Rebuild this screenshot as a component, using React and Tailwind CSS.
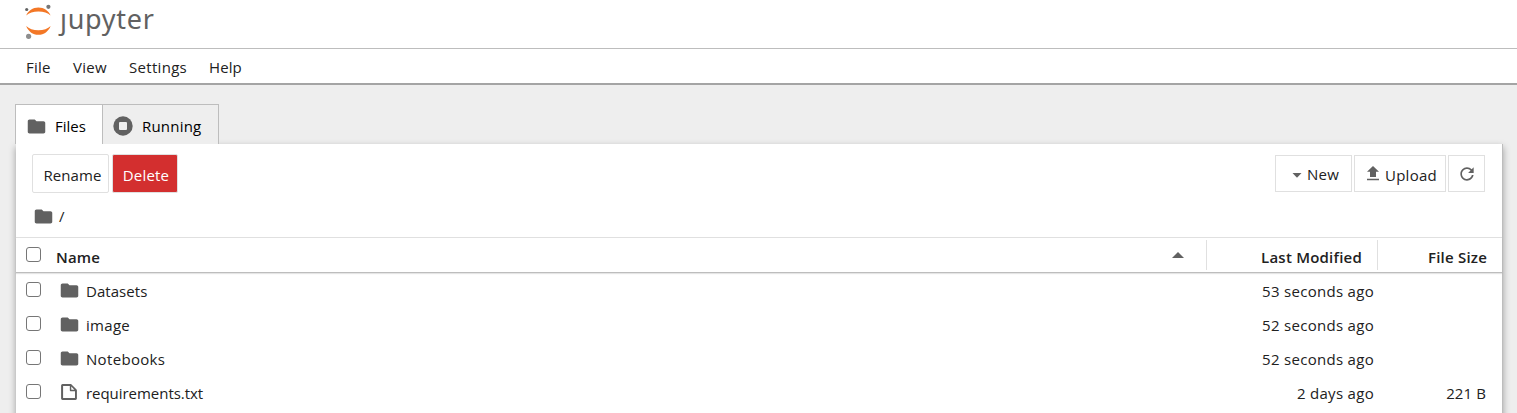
import React from 'react';

const ROWS = [
  { name: 'Datasets', kind: 'folder', modified: '53 seconds ago', size: '', track: 'tracking-[0.050px]' },
  { name: 'image', kind: 'folder', modified: '52 seconds ago', size: '', track: 'tracking-[0.3px]' },
  { name: 'Notebooks', kind: 'folder', modified: '52 seconds ago', size: '', track: 'tracking-[0.33px]' },
  { name: 'requirements.txt', kind: 'file', modified: '2 days ago', size: '221 B', track: 'tracking-[-0.040px]' },
];

function Folder() {
  return (
    <svg className="block h-[21px] w-[21px] shrink-0" viewBox="0 0 24 24" fill="#616161">
      <path d="M10 4H4c-1.1 0-1.99.9-1.99 2L2 18c0 1.1.9 2 2 2h16c1.1 0 2-.9 2-2V8c0-1.1-.9-2-2-2h-8l-2-2z" />
    </svg>
  );
}

function FileIcon() {
  return (
    <svg className="block h-[20px] w-[20px] shrink-0" viewBox="0 0 22 22" fill="#616161">
      <path d="M19.3 8.2l-5.5-5.5c-.3-.3-.7-.5-1.2-.5H3.9c-.8.1-1.6.9-1.6 1.8v14.1c0 .9.7 1.6 1.6 1.6h14.2c.9 0 1.6-.7 1.6-1.6V9.4c.1-.5-.1-.9-.4-1.2zm-5.8-3.3l3.4 3.6h-3.4V4.9zm3.9 12.7H4.7c-.1 0-.2 0-.2-.2V4.7c0-.2.1-.3.2-.3h7.2v4.4s0 .8.3 1.1c.3.3 1.1.3 1.1.3h4.3v7.2s-.1.2-.2.2z" />
    </svg>
  );
}

function Checkbox() {
  return <span className="block h-[15px] w-[15px] shrink-0 rounded-[3px] border border-[#767676] bg-white" />;
}

function Logo() {
  return (
    <div className="flex h-12 items-start pl-[25px]">
      <svg className="block h-[40px] w-[28px]" viewBox="0 0 28 40">
        <path d="M1.2 15.5C3.1 10.8 7.8 7.5 13.4 7.5s10.300 3.300 12.200 8C22.900 13.100 18.500 11.600 13.400 11.600S3.900 13.100 1.200 15.500z" fill="#f37726" />
        <path d="M1.2 25.900C3.100 31.200 7.800 34.700 13.400 34.700s10.300-3.500 12.200-8.800C22.900 28.500 18.500 30.200 13.400 30.200S3.900 28.500 1.200 25.900z" fill="#f37726" />
        <circle cx="23.400" cy="6.800" r="2.100" fill="#767677" />
        <circle cx="1.700" cy="9.500" r="1.600" fill="#616262" />
        <circle cx="3.600" cy="36.300" r="2.600" fill="#8e8e8e" />
      </svg>
      <div className="ml-[7px] mt-px flex font-['Noto_Sans'] text-[27px] leading-[36px] tracking-[0.7px] text-[#616161]">
        <span className="[clip-path:inset(12px_-6px_-6px_-6px)]">j</span>
        <span>upyter</span>
      </div>
    </div>
  );
}

export default function App() {
  return (
    <div className="flex h-[413px] w-[1517px] flex-col overflow-hidden bg-[#eee] font-['Open_Sans','Noto_Sans',sans-serif] text-[15px] leading-5 text-[#212121]">
      <header className="h-[49px] shrink-0 border-b border-[#bdbdbd] bg-white">
        <Logo />
      </header>
      <nav className="flex h-[36px] shrink-0 items-center border-b-2 border-[#a4a4a4] bg-white pl-[26px] pt-px">
        <span className="w-[47px] tracking-[0.2px]">File</span>
        <span className="w-[56px] tracking-[0.3px]">View</span>
        <span className="w-[80px] tracking-[0.3px]">Settings</span>
        <span className="tracking-[0.1px]">Help</span>
      </nav>

      <main className="mt-[19px] flex flex-1 flex-col pl-[15px] pr-[14px]">
        <div className="relative z-10 flex h-[40px] shrink-0 text-black">
          <div className="flex w-[87px] items-center border-l border-t border-[#bdbdbd] bg-white pl-[10px] pt-[3px]">
            <Folder />
            <span className="ml-[8px]">Files</span>
          </div>
          <div className="flex w-[117px] items-center border-x border-t border-[#bdbdbd] bg-[#eee] pl-[8px] pt-[3px]">
            <svg className="block h-[24px] w-[24px]" viewBox="0 0 24 24">
              <circle cx="12" cy="12" r="9.700" fill="#616161" />
              <rect x="8" y="8" width="8" height="8" rx="1" fill="#eee" />
            </svg>
            <span className="ml-[7px] tracking-[0.2px]">Running</span>
          </div>
        </div>

        <section className="ml-px flex h-[300px] w-[1487px] shrink-0 flex-col border-r border-[#bdbdbd] bg-white shadow-[0_3px_7px_0px_rgba(0,0,0,0.35)]">
          <div className="flex h-[59px] items-start pl-[16px] pr-[17px] pt-[10px]">
            <div className="flex h-[39px] w-[77px] items-center justify-center rounded-[2px] border border-[#e0e0e0] pl-[4px] pt-[3px] tracking-[0.100px]">Rename</div>
            <div className="ml-[3px] flex h-[39px] w-[66px] items-center justify-center rounded-[2px] border border-[#e0e0e0] bg-[#d32f2f] pl-[2px] pt-[3px] tracking-[0.2px] text-white">Delete</div>
            <div className="ml-auto mt-px flex h-[37px] w-[77px] items-center border border-[#e0e0e0] pl-[16px]">
              <svg className="mt-[3px] h-[5px] w-[10px]" viewBox="0 0 10 5"><path d="M0.500 0h9L5 4.700z" fill="#616161" /></svg>
              <span className="ml-[5px] pt-px tracking-[0.3px]">New</span>
            </div>
            <div className="ml-[2px] mt-px flex h-[37px] w-[92px] items-center border border-[#e0e0e0] pl-[12px]">
              <svg className="block h-[15px] w-[12px]" viewBox="0 0 12 15" fill="#616161">
                <path d="M6 0l6 5.800H9V11H3V5.800H0zM0 12.700h12v1.600H0z" />
              </svg>
              <span className="ml-[6px] pt-[2px] tracking-[0.250px]">Upload</span>
            </div>
            <div className="ml-[2px] mt-px flex h-[37px] w-[37px] items-center justify-center border border-[#e0e0e0]">
              <svg className="block h-[20px] w-[20px]" viewBox="0 0 18 18" fill="#616161">
                <path d="M9 13.500c-2.490 0-4.500-2.010-4.500-4.500S6.510 4.500 9 4.500c1.240 0 2.360.52 3.170 1.330L10 8h5V3l-1.760 1.760C12.150 3.680 10.660 3 9 3 5.690 3 3.010 5.690 3.010 9S5.690 15 9 15c2.970 0 5.430-2.160 5.900-5h-1.520c-.46 2-2.240 3.500-4.380 3.500z" />
              </svg>
            </div>
          </div>

          <div className="flex h-[35px] shrink-0 items-start border-b border-[#e0e0e0] pl-[17px] pt-[3px]">
            <Folder />
            <span className="ml-[5px]">/</span>
          </div>

          <div className="flex h-[35px] shrink-0 border-b border-[#bdbdbd] font-semibold shadow-[0_1px_1px_rgba(0,0,0,0.1)]">
            <div className="flex flex-1 items-start pl-[10px] pt-[9px]">
              <Checkbox />
              <span className="ml-[15px] tracking-[0.2px]">Name</span>
              <svg className="ml-auto mr-[22px] mt-[5px] h-[6px] w-[12px]" viewBox="0 0 12 6"><path d="M0 6h12L6 0z" fill="#616161" /></svg>
            </div>
            <div className="mt-[2px] flex h-[30px] w-[171px] justify-end border-l border-[#e0e0e0] pr-[15px] pt-[7px] tracking-[0.220px]">Last Modified</div>
            <div className="mt-[2px] flex h-[30px] w-[125px] justify-end border-l border-[#e0e0e0] pr-[15px] pt-[7px] tracking-[0.200px]">File Size</div>
          </div>

          <div className="flex flex-col pt-px">
            {ROWS.map((row) => (
              <div key={row.name} className="flex h-[34px] items-center pl-[10px] pr-[16px]">
                <div className="pb-[4px]"><Checkbox /></div>
                <div className="ml-[15px] flex w-[30px] justify-center pb-[2px] pr-[4px]">{row.kind === 'folder' ? <Folder /> : <FileIcon />}</div>
                <span className={`flex-1 pb-px ${row.track}`}>{row.name}</span>
                <span className="w-[170px] pb-px text-right tracking-[0.3px]">{row.modified}</span>
                <span className="w-[112px] pb-px text-right tracking-[0.1px]">{row.size}</span>
              </div>
            ))}
          </div>
        </section>
      </main>
    </div>
  );
}
